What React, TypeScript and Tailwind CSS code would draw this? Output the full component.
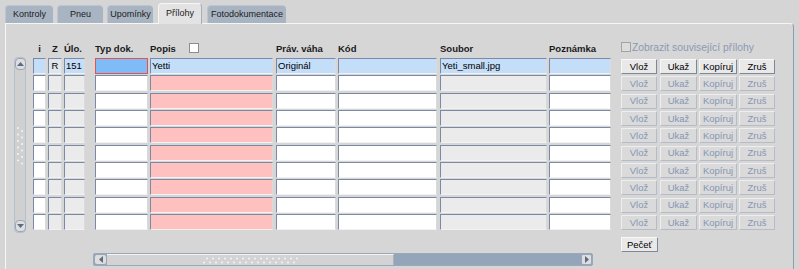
import React from 'react';

type Col = {
  label: string;
  w: string;
  gap: string;
  head: string;
  first: string;
  rest: string;
  value?: string;
  valueCls?: string;
};

const COLS: Col[] = [
  { label: 'i', w: 'w-[13px]', gap: 'ml-0', head: 'justify-center', first: 'bg-[#c4ddf8]', rest: 'bg-white' },
  { label: 'Z', w: 'w-[14px]', gap: 'ml-[2px]', head: 'justify-center', first: 'bg-[#e1e5ec]', rest: 'bg-[#ebebeb]', value: 'R', valueCls: 'justify-center' },
  { label: 'Úlo.', w: 'w-[21px]', gap: 'ml-[2px]', head: '', first: 'bg-[#c4ddf8]', rest: 'bg-[#ebebeb]', value: '151', valueCls: 'text-[#2c1d6b]' },
  { label: 'Typ dok.', w: 'w-[53px]', gap: 'ml-[10px]', head: '', first: 'focus', rest: 'bg-white' },
  { label: 'Popis', w: 'w-[123px]', gap: 'ml-[2px]', head: '', first: 'bg-[#c4ddf8]', rest: 'bg-[#ffc0c0]', value: 'Yetti' },
  { label: 'Práv. váha', w: 'w-[60px]', gap: 'ml-[3px]', head: '', first: 'bg-[#c4ddf8]', rest: 'bg-white', value: 'Originál' },
  { label: 'Kód', w: 'w-[99px]', gap: 'ml-[2px]', head: '', first: 'bg-[#c4ddf8]', rest: 'bg-white' },
  { label: 'Soubor', w: 'w-[107px]', gap: 'ml-[3px]', head: '', first: 'bg-[#c4ddf8]', rest: 'bg-[#ebebeb]', value: 'Yeti_small.jpg' },
  { label: 'Poznámka', w: 'w-[62px]', gap: 'ml-[2px]', head: '', first: 'bg-[#c4ddf8]', rest: 'bg-white' },
];

const BUTTONS = [
  { label: 'Vlož', cls: 'w-[36px] ml-0' },
  { label: 'Ukaž', cls: 'w-[37px] ml-[3px]' },
  { label: 'Kopíruj', cls: 'w-[38px] ml-[2px]' },
  { label: 'Zruš', cls: 'w-[36px] ml-[2px]' },
];

const TABS = [
  { label: 'Kontroly', cls: 'w-[48px] ml-[5px]' },
  { label: 'Pneu', cls: 'w-[46px] ml-[4px]' },
  { label: 'Upomínky', cls: 'w-[46px] ml-[4px]' },
  { label: 'Přílohy', cls: 'w-[44px] ml-[5px]', active: true },
  { label: 'Fotodokumentace', cls: 'w-[79px] ml-[5px]' },
];

const rows = Array.from({ length: 10 }, (_, i) => i);

const cellBase =
  'h-[16px] flex items-center px-[1px] text-[9.5px] leading-none text-black whitespace-nowrap overflow-hidden border';
const cellBorder = 'border-t-[#7b8aa4] border-l-[#7b8aa4] border-b-[#f2f2f2] border-r-[#dadada]';
const focusCell = 'bg-[#7fbbf7] border-[#e5514b]';

function Btn({ label, cls, enabled }: { label: string; cls: string; enabled: boolean }) {
  return (
    <div
      className={`${cls} h-[15px] flex items-center justify-center text-[9.5px] leading-none border rounded-[1px] ${
        enabled
          ? 'bg-[#e9e9e9] text-black border-t-[#f8f8f8] border-l-[#f8f8f8] border-b-[#7e8796] border-r-[#7e8796]'
          : 'bg-[#dadada] text-[#8796b3] border-t-[#eeeeee] border-l-[#eeeeee] border-b-[#b5bcc8] border-r-[#b5bcc8]'
      }`}
    >
      {label}
    </div>
  );
}

function VScroll() {
  return (
    <div className="mt-[33px] w-[12px] h-[176px] flex flex-col items-center rounded-[4px] border border-[#b6bfcc] bg-[#d0d0d0]">
      <div className="w-[11px] h-[12px] rounded-[4px] border border-[#9aa6b8] bg-[#dedede] flex items-center justify-center">
        <svg width="7" height="4" viewBox="0 0 7 4">
          <path d="M0 4 L3.5 0 L7 4 Z" fill="#5b6b86" />
        </svg>
      </div>
      <div className="flex-1 flex items-center justify-center">
        <svg width="8" height="40" viewBox="0 0 8 40">
          {[0, 1, 2, 3, 4, 5].map((r) => (
            <g key={r}>
              <circle cx="2" cy={3 + r * 6.5} r="1" fill="#f4f4f4" />
              <circle cx="6" cy={6 + r * 6.5} r="1" fill="#f4f4f4" />
            </g>
          ))}
        </svg>
      </div>
      <div className="w-[11px] h-[12px] rounded-[4px] border border-[#9aa6b8] bg-[#dedede] flex items-center justify-center">
        <svg width="7" height="4" viewBox="0 0 7 4">
          <path d="M0 0 L3.5 4 L7 0 Z" fill="#5b6b86" />
        </svg>
      </div>
    </div>
  );
}

function HScroll() {
  return (
    <div className="ml-[60px] mt-[22px] w-[500px] h-[13px] flex border border-[#9aa8bc] rounded-[2px] bg-[#95a5b9]">
      <div className="w-[13px] h-full rounded-[3px] border border-[#9aa6b8] bg-[#dedede] flex items-center justify-center">
        <svg width="4" height="7" viewBox="0 0 4 7">
          <path d="M4 0 L0 3.5 L4 7 Z" fill="#5b6b86" />
        </svg>
      </div>
      <div className="w-[287px] h-full bg-[#d3d3d3] border-t border-[#f4f4f4] border-r border-r-[#a9b3c2] flex items-center">
        <svg width="100" height="9" viewBox="0 0 100 9" className="ml-[96px]">
          {Array.from({ length: 16 }, (_, i) => (
            <g key={i}>
              <circle cx={4 + i * 6} cy="2.5" r="1" fill="#f4f4f4" />
              <circle cx={1 + i * 6} cy="6.5" r="1" fill="#f4f4f4" />
            </g>
          ))}
        </svg>
      </div>
      <div className="flex-1" />
      <div className="w-[11px] h-full rounded-[2px] border border-[#9aa6b8] bg-[#dedede] flex items-center justify-center">
        <svg width="4" height="7" viewBox="0 0 4 7">
          <path d="M0 0 L4 3.5 L0 7 Z" fill="#5b6b86" />
        </svg>
      </div>
    </div>
  );
}

export default function App() {
  return (
    <div
      className="w-[799px] h-[269px] overflow-hidden bg-[#d5d5d5] flex flex-col"
      style={{ fontFamily: '"Liberation Sans", Arial, sans-serif' }}
    >
      {/* tabs */}
      <div className="h-[23px] flex items-end">
        {TABS.map((t) =>
          t.active ? (
            <div
              key={t.label}
              className={`${t.cls} h-[21px] -mb-px relative z-10 rounded-t-[4px] bg-[#e3e3e3] border border-b-0 border-[#f6f6f6] border-r-[#a4aebc] flex items-center justify-center text-[9px] text-[#1b1b1b]`}
            >
              {t.label}
            </div>
          ) : (
            <div
              key={t.label}
              className={`${t.cls} h-[18px] rounded-t-[4px] bg-[#a9b4c3] border-t border-l border-[#bcc6d2] flex items-center justify-center text-[9px] text-[#1b1b1b]`}
            >
              {t.label}
            </div>
          )
        )}
      </div>

      {/* panel */}
      <div className="ml-[5px] w-[789px] flex-1 flex border-t border-l border-[#f6f6f6] border-r border-r-[#8f9bb0] rounded-tr-[4px] bg-[#d6d6d6] pl-[8px]">
        <VScroll />

        {/* fields */}
        <div className="ml-[7px] flex flex-col">
          <div className="h-[34px] flex items-end pb-[4px]">
            {COLS.map((c) => (
              <div
                key={c.label}
                className={`${c.w} ${c.gap} flex items-end ${c.head} text-[9.5px] font-bold leading-[11px] text-[#1a1a1a] whitespace-nowrap`}
              >
                {c.label}
                {c.label === 'Popis' && (
                  <span className="ml-[13px] mb-[1px] w-[10px] h-[10px] bg-white border border-[#8d8d8d]" />
                )}
              </div>
            ))}
          </div>
          {rows.map((r) => (
            <div key={r} className="h-[17.33px] flex">
              {COLS.map((c) => {
                const isFirst = r === 0;
                const bg = isFirst ? c.first : c.rest;
                const cls = bg === 'focus' ? focusCell : `${bg} ${cellBorder}`;
                return (
                  <div key={c.label} className={`${c.w} ${c.gap} ${cellBase} ${cls} ${isFirst ? c.valueCls ?? '' : ''}`}>
                    {isFirst ? c.value : null}
                  </div>
                );
              })}
            </div>
          ))}
          <HScroll />
        </div>

        {/* buttons */}
        <div className="ml-[10px] flex flex-col">
          <div className="h-[34px] flex items-end pb-[5px]">
            <span className="w-[10px] h-[10px] border border-[#a3a3a3] bg-[#dcdcdc] mb-[1px]" />
            <span className="ml-[1px] text-[10.3px] leading-[11px] text-[#8b99b5] whitespace-nowrap">
              Zobrazit související přílohy
            </span>
          </div>
          {rows.map((r) => (
            <div key={r} className="h-[17.33px] flex pt-[1px]">
              {BUTTONS.map((b) => (
                <Btn key={b.label} label={b.label} cls={b.cls} enabled={r === 0} />
              ))}
            </div>
          ))}
          <div className="mt-[6px] flex">
            <Btn label="Pečeť" cls="w-[37px]" enabled />
          </div>
        </div>
      </div>
    </div>
  );
}
